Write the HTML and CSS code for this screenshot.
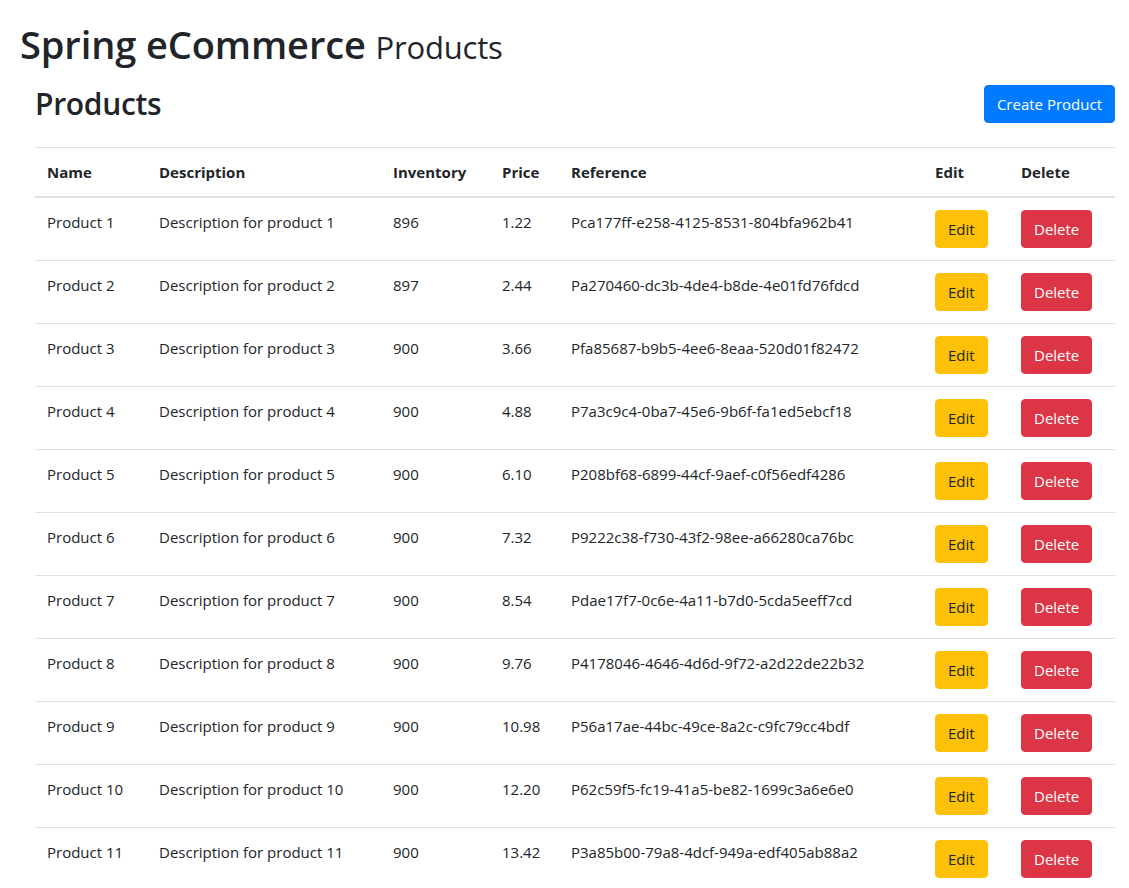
FILE: index.html
```html
<!DOCTYPE html>
<html lang="en">
<head>
<meta charset="utf-8">
<title>Spring eCommerce Products</title>
<link rel="stylesheet" href="styles.css">
</head>
<body>
<div class="page">
  <h1 class="title">Spring eCommerce <small class="muted">Products</small></h1>
  <div class="content">
    <div class="toolbar">
      <h2 class="heading">Products</h2>
      <a class="btn btn-primary" href="#">Create Product</a>
    </div>
    <table class="table">
      <colgroup>
        <col class="c-name"><col class="c-desc"><col class="c-inv"><col class="c-price"><col class="c-ref"><col class="c-edit"><col class="c-del">
      </colgroup>
      <thead>
        <tr><th>Name</th><th>Description</th><th>Inventory</th><th>Price</th><th>Reference</th><th>Edit</th><th>Delete</th></tr>
      </thead>
      <tbody>
        <tr><td>Product 1</td><td>Description for product 1</td><td>896</td><td>1.22</td><td>Pca177ff-e258-4125-8531-804bfa962b41</td><td><a class="btn btn-warning" href="#">Edit</a></td><td><a class="btn btn-danger" href="#">Delete</a></td></tr>
        <tr><td>Product 2</td><td>Description for product 2</td><td>897</td><td>2.44</td><td>Pa270460-dc3b-4de4-b8de-4e01fd76fdcd</td><td><a class="btn btn-warning" href="#">Edit</a></td><td><a class="btn btn-danger" href="#">Delete</a></td></tr>
        <tr><td>Product 3</td><td>Description for product 3</td><td>900</td><td>3.66</td><td>Pfa85687-b9b5-4ee6-8eaa-520d01f82472</td><td><a class="btn btn-warning" href="#">Edit</a></td><td><a class="btn btn-danger" href="#">Delete</a></td></tr>
        <tr><td>Product 4</td><td>Description for product 4</td><td>900</td><td>4.88</td><td>P7a3c9c4-0ba7-45e6-9b6f-fa1ed5ebcf18</td><td><a class="btn btn-warning" href="#">Edit</a></td><td><a class="btn btn-danger" href="#">Delete</a></td></tr>
        <tr><td>Product 5</td><td>Description for product 5</td><td>900</td><td>6.10</td><td>P208bf68-6899-44cf-9aef-c0f56edf4286</td><td><a class="btn btn-warning" href="#">Edit</a></td><td><a class="btn btn-danger" href="#">Delete</a></td></tr>
        <tr><td>Product 6</td><td>Description for product 6</td><td>900</td><td>7.32</td><td>P9222c38-f730-43f2-98ee-a66280ca76bc</td><td><a class="btn btn-warning" href="#">Edit</a></td><td><a class="btn btn-danger" href="#">Delete</a></td></tr>
        <tr><td>Product 7</td><td>Description for product 7</td><td>900</td><td>8.54</td><td>Pdae17f7-0c6e-4a11-b7d0-5cda5eeff7cd</td><td><a class="btn btn-warning" href="#">Edit</a></td><td><a class="btn btn-danger" href="#">Delete</a></td></tr>
        <tr><td>Product 8</td><td>Description for product 8</td><td>900</td><td>9.76</td><td>P4178046-4646-4d6d-9f72-a2d22de22b32</td><td><a class="btn btn-warning" href="#">Edit</a></td><td><a class="btn btn-danger" href="#">Delete</a></td></tr>
        <tr><td>Product 9</td><td>Description for product 9</td><td>900</td><td>10.98</td><td>P56a17ae-44bc-49ce-8a2c-c9fc79cc4bdf</td><td><a class="btn btn-warning" href="#">Edit</a></td><td><a class="btn btn-danger" href="#">Delete</a></td></tr>
        <tr><td>Product 10</td><td>Description for product 10</td><td>900</td><td>12.20</td><td>P62c59f5-fc19-41a5-be82-1699c3a6e6e0</td><td><a class="btn btn-warning" href="#">Edit</a></td><td><a class="btn btn-danger" href="#">Delete</a></td></tr>
        <tr><td>Product 11</td><td>Description for product 11</td><td>900</td><td>13.42</td><td>P3a85b00-79a8-4dcf-949a-edf405ab88a2</td><td><a class="btn btn-warning" href="#">Edit</a></td><td><a class="btn btn-danger" href="#">Delete</a></td></tr>
      </tbody>
    </table>
  </div>
</div>
</body>
</html>
```

FILE: styles.css
```css
* { box-sizing: border-box; }
html, body { margin: 0; padding: 0; }
body {
  font-family: "Open Sans", "Noto Sans", sans-serif;
  font-size: 15px;
  line-height: 24px;
  color: #212529;
  background: #fff;
}
.page { padding: 20px 14px 0 20px; }
.title {
  margin: 0 0 14px;
  font-size: 38px;
  font-weight: 600;
  line-height: 48px;
  letter-spacing: -0.1px;
}
.title .muted { font-size: 31px; font-weight: 400; letter-spacing: -0.2px; }
.content { padding-left: 15px; }
.toolbar {
  display: flex;
  justify-content: space-between;
  align-items: flex-start;
  margin-bottom: 24px;
}
.heading {
  margin: 0;
  font-size: 30px;
  font-weight: 600;
  line-height: 38px;
  letter-spacing: -0.3px;
}
.btn {
  display: inline-block;
  padding: 6px 12px;
  font-size: 15px;
  line-height: 24px;
  border: 1px solid transparent;
  border-radius: 4px;
  text-decoration: none;
  white-space: nowrap;
}
.btn-primary { background: #007bff; border-color: #007bff; color: #fff; }
.btn-warning { background: #ffc107; border-color: #ffc107; color: #212529; }
.btn-danger { background: #dc3545; border-color: #dc3545; color: #fff; }
.table {
  width: 100%;
  border-collapse: collapse;
  table-layout: fixed;
}
.c-name { width: 112px; }
.c-desc { width: 234px; }
.c-inv { width: 109px; }
.c-price { width: 69px; }
.c-ref { width: 364px; }
.c-edit { width: 86px; }
.c-del { width: 106px; }
.table th, .table td {
  padding: 12px;
  text-align: left;
  vertical-align: top;
  border-top: 1px solid #dee2e6;
  white-space: nowrap;
}
.table th { font-weight: 700; font-size: 15px; }
.table thead th { border-bottom: 2px solid #dee2e6; }
.table tbody tr:first-child td { border-top: 0; }
```
